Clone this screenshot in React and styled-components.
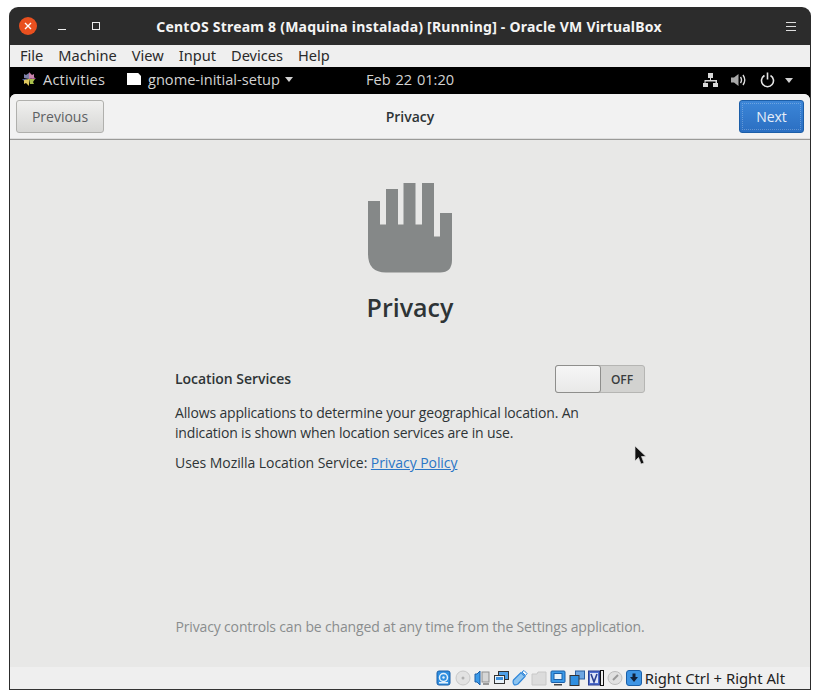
import styled, { createGlobalStyle } from "styled-components";

const Global = createGlobalStyle`
  html, body { margin: 0; padding: 0; background: #fff; }
  body { width: 820px; height: 699px; overflow: hidden; }
`;

const Page = styled.div`
  width: 820px;
  height: 699px;
  padding: 7px 9px 9px 9px;
  box-sizing: border-box;
  position: relative;
`;
const Win = styled.div`
  width: 802px;
  height: 683px;
  display: flex;
  flex-direction: column;
  border-radius: 9px 9px 0 0;
  overflow: hidden;
  background: #2c2c2c;
`;
const TitleBar = styled.div`
  height: 38px;
  flex: none;
  display: grid;
  grid-template-columns: 1fr auto 1fr;
  align-items: center;
  color: #f4f4f4;
  padding: 0 15px 0 10px;
`;
const WinControls = styled.div`
  display: flex;
  align-items: center;
`;
const CloseBtn = styled.div`
  width: 18px;
  height: 18px;
  border-radius: 50%;
  background: #e9501f;
  display: flex;
  align-items: center;
  justify-content: center;
`;
const MinBtn = styled.div`
  width: 8px;
  height: 1px;
  background: #eee;
  margin: 7px 0 0 21px;
`;
const MaxBtn = styled.div`
  width: 6px;
  height: 6px;
  border: 1px solid #eee;
  margin-left: 26px;
`;
const WinTitle = styled.div`
  font: 700 14px "Noto Sans", sans-serif;
  letter-spacing: 0.22px;
  white-space: nowrap;
  padding-left: 3px;
`;
const Burger = styled.div`
  justify-self: end;
  width: 10px;
  height: 7px;
  border-top: 1px solid #ddd;
  border-bottom: 1px solid #ddd;
  position: relative;
  &::after {
    content: "";
    position: absolute;
    left: 0;
    right: 0;
    top: 3px;
    height: 1px;
    background: #ddd;
  }
`;
const Frame = styled.div`
  flex: 1;
  display: flex;
  flex-direction: column;
  min-height: 0;
  margin: 0 1px 0 1px;
  border-bottom: 1px solid #333;
  background: #000;
`;
const MenuBar = styled.div`
  height: 22px;
  flex: none;
  box-sizing: border-box;
  padding: 0 0 2px 10px;
  background: #efefef;
  display: flex;
  align-items: center;
  gap: 15px;
  font: 14.6px "Noto Sans", sans-serif;
  color: #2a2a2a;
`;
const GnomeBar = styled.div`
  height: 27px;
  flex: none;
  box-sizing: border-box;
  background: #000;
  color: #d2d2d2;
  display: flex;
  align-items: center;
  font: 14.6px "Open Sans", sans-serif;
  padding: 0 17px 3px 12px;
`;
const Activities = styled.div`
  display: flex;
  align-items: center;
  gap: 7px;
  width: 105px;
  letter-spacing: 0.2px;
`;
const AppMenu = styled.div`
  display: flex;
  align-items: center;
  width: 239px;
`;
const AppIcon = styled.div`
  width: 14px;
  height: 12px;
  background: #fff;
  clip-path: polygon(0 0, 80% 0, 100% 25%, 100% 100%, 0 100%);
  margin-right: 7px;
`;
const Caret = styled.div`
  width: 0;
  height: 0;
  border-left: 4.5px solid transparent;
  border-right: 4.5px solid transparent;
  border-top: 5px solid #d2d2d2;
  margin-left: ${(p) => p.$gap || 0}px;
`;
const Clock = styled.div`
  flex: 1;
  word-spacing: 1px;
`;
const Tray = styled.div`
  display: flex;
  align-items: center;
  padding-top: 2px;
`;
const Dialog = styled.div`
  flex: 1;
  display: flex;
  flex-direction: column;
  min-height: 0;
  background: #e8e8e7;
  border-radius: 6px 6px 0 0;
  overflow: hidden;
`;
const Header = styled.div`
  height: 46px;
  flex: none;
  box-sizing: border-box;
  background: #f2f2f2;
  border-bottom: 1px solid #9a9a98;
  box-shadow: inset 0 -1px 0 #dedede;
  display: grid;
  grid-template-columns: 1fr auto 1fr;
  align-items: center;
  padding: 0 6px;
`;
const HeaderTitle = styled.div`
  font: 600 14px "Open Sans", sans-serif;
  color: #2e3436;
`;
const NavButton = styled.div`
  height: 33px;
  box-sizing: border-box;
  display: flex;
  align-items: center;
  justify-content: center;
  justify-self: ${(p) => (p.$primary ? "end" : "start")};
  border-radius: 3px;
  font: 14px "Open Sans", sans-serif;
  width: ${(p) => (p.$primary ? 65 : 88)}px;
  color: ${(p) => (p.$primary ? "#e6eef8" : "#5d6163")};
  border: 1px solid ${(p) => (p.$primary ? "#1c5ea8" : "#b0b0ad")};
  outline: ${(p) => (p.$primary ? "1px dotted rgba(255, 255, 255, 0.25)" : "none")};
  outline-offset: -4px;
  background: ${(p) =>
    p.$primary
      ? "linear-gradient(#3c86d8, #2b6fc2)"
      : "linear-gradient(#f0f0ef, #d7d7d5)"};
`;
const Body = styled.div`
  flex: 1;
  display: flex;
  flex-direction: column;
  align-items: center;
  min-height: 0;
  padding-top: 43px;
`;
const HandIcon = styled.svg`
  width: 86px;
  height: 90px;
  display: block;
  flex: none;
`;
const BigTitle = styled.h1`
  margin: 16px 0 0;
  height: 36px;
  font: 600 25px/36px "Open Sans", sans-serif;
  color: #2e3436;
`;
const Panel = styled.div`
  width: 470px;
  margin-top: 40px;
  font: 14px/20px "Open Sans", sans-serif;
  letter-spacing: -0.16px;
  color: #2e3436;
  flex: 1;
  display: flex;
  flex-direction: column;
`;
const SettingRow = styled.div`
  display: flex;
  align-items: center;
  justify-content: space-between;
  height: 28px;
  margin-bottom: 10px;
  font-weight: 600;
  letter-spacing: -0.05px;
`;
const RowLabel = styled.span`
  padding-bottom: 1px;
`;
const Toggle = styled.div`
  width: 90px;
  height: 28px;
  box-sizing: border-box;
  background: #d2d2d0;
  border: 1px solid #b5b5b3;
  border-radius: 3px;
  position: relative;
  display: flex;
  align-items: center;
  justify-content: flex-end;
  padding-right: 11px;
  font: 600 12px "Open Sans", sans-serif;
  color: #3a3d3e;
`;
const Knob = styled.div`
  position: absolute;
  left: -1px;
  top: -1px;
  width: 46px;
  height: 28px;
  box-sizing: border-box;
  border: 1px solid #8e8e8c;
  border-radius: 3px;
  background: linear-gradient(#f6f6f6, #e9e9e8);
`;
const Para = styled.p`
  margin: 0 0 10px;
  letter-spacing: ${(p) => (p.$loose ? "-0.06px" : "inherit")};
`;
const PolicyLink = styled.a`
  color: #2a76c6;
  text-decoration: underline;
`;
const Footnote = styled.div`
  margin-top: auto;
  margin-bottom: 30px;
  text-align: center;
  white-space: nowrap;
  color: #8a8d8e;
`;
const StatusBar = styled.div`
  height: 22px;
  flex: none;
  background: #efefef;
  display: flex;
  align-items: center;
  justify-content: flex-end;
  gap: 3px;
  padding-right: 25px;
  font: 14.8px "Noto Sans", sans-serif;
  color: #222;
`;
const Sep = styled.div`
  width: 2px;
  height: 14px;
  border: 1px solid #111;
  margin-left: -3px;
`;
const StatusIcon = styled.svg`
  flex: none;
  height: 16px;
  width: ${(p) => p.$w || 16}px;
`;
const Cursor = styled.svg`
  position: absolute;
  left: 634px;
  top: 445px;
  width: 13px;
  height: 21px;
`;

export default function App() {
  return (
    <Page>
      <Global />
      <Win>
        <TitleBar>
          <WinControls>
            <CloseBtn>
              <svg width="8" height="8" viewBox="0 0 8 8">
                <path d="M1 1L7 7M7 1L1 7" stroke="#fff" strokeWidth="1.4" />
              </svg>
            </CloseBtn>
            <MinBtn />
            <MaxBtn />
          </WinControls>
          <WinTitle>CentOS Stream 8 (Maquina instalada) [Running] - Oracle VM VirtualBox</WinTitle>
          <Burger />
        </TitleBar>
        <Frame>
          <MenuBar>
            <span>File</span>
            <span>Machine</span>
            <span>View</span>
            <span>Input</span>
            <span>Devices</span>
            <span>Help</span>
          </MenuBar>
          <GnomeBar>
            <Activities>
              <svg width="14" height="14" viewBox="0 0 14 14">
                <path d="M7 0L9.500 2.500 7 5Z" fill="#c06a9a" />
                <path d="M14 7L11.500 4.500 9 7Z" fill="#9a4f8c" />
                <path d="M7 14L4.500 11.500 7 9Z" fill="#c9b53c" />
                <path d="M0 7L2.500 9.500 5 7Z" fill="#4e5a9c" />
                <path d="M7 7V1L4 3 2 2V6Z" fill="#7d80a8" />
                <path d="M7 7H13L11 10 12 12H8Z" fill="#a9c04c" />
                <path d="M7 7V13L4 11 2 12V8Z" fill="#e0c860" />
                <path d="M7 7V1L10 3 12 2V6Z" fill="#c884ac" />
              </svg>
              Activities
            </Activities>
            <AppMenu>
              <AppIcon />
              gnome-initial-setup
              <Caret $gap={5} />
            </AppMenu>
            <Clock>Feb 22 01:20</Clock>
            <Tray>
              <svg width="15" height="15" viewBox="0 0 15 15">
                <path d="M5 0H10V5H8V7H14V10H15V14H10V10H12.500V8.500H2.500V10H5V14H0V10H1.500V7H7V5H5Z" fill="#d8d8d8" />
              </svg>
              <svg width="16" height="14" viewBox="0 0 16 14" style={{ marginLeft: 13 }}>
                <path d="M0 4.500H3L7.500 1V13L3 9.500H0Z" fill="#a8a8a8" />
                <path d="M9.500 4Q11.500 7 9.500 10M12 2Q15.500 7 12 12" stroke="#d8d8d8" strokeWidth="1.400" fill="none" />
              </svg>
              <svg width="15" height="16" viewBox="0 0 15 16" style={{ marginLeft: 13 }}>
                <path d="M4.500 3.500A6 6 0 1 0 10.500 3.500M7.500 0.500V7.500" stroke="#e4e4e4" strokeWidth="1.600" fill="none" />
              </svg>
              <Caret $gap={10} />
            </Tray>
          </GnomeBar>
          <Dialog>
            <Header>
              <NavButton>Previous</NavButton>
              <HeaderTitle>Privacy</HeaderTitle>
              <NavButton $primary>Next</NavButton>
            </Header>
            <Body>
              <HandIcon viewBox="0 0 86 90">
                <path
                  d="M1 18H13V41.500H19V6H31V41.500H36.500V0H48.500V41.500H55V0H67V53.500H73V30H85V77Q85 89.500 73 89.500H19Q1 89.500 1 71Z"
                  fill="#858888"
                />
              </HandIcon>
              <BigTitle>Privacy</BigTitle>
              <Panel>
                <SettingRow>
                  <RowLabel>Location Services</RowLabel>
                  <Toggle>
                    <Knob />
                    OFF
                  </Toggle>
                </SettingRow>
                <Para>
                  Allows applications to determine your geographical location. An
                  <br />
                  indication is shown when location services are in use.
                </Para>
                <Para $loose>
                  Uses Mozilla Location Service: <PolicyLink>Privacy Policy</PolicyLink>
                </Para>
                <Footnote>Privacy controls can be changed at any time from the Settings application.</Footnote>
              </Panel>
            </Body>
          </Dialog>
          <StatusBar>
            <StatusIcon viewBox="0 0 16 16">
              <rect x="1" y="1" width="13" height="14" rx="2" fill="#2f8fe0" stroke="#1a5fa8" />
              <circle cx="7.500" cy="7.500" r="4" fill="none" stroke="#e4f0fa" strokeWidth="1.500" />
              <circle cx="7.500" cy="7.500" r="1.200" fill="#e4f0fa" />
              <rect x="3" y="12" width="9" height="1.500" fill="#e4f0fa" />
            </StatusIcon>
            <StatusIcon viewBox="0 0 16 16">
              <circle cx="8" cy="8" r="7" fill="#e2e2e2" stroke="#c8c8c8" />
              <circle cx="8" cy="8" r="1.500" fill="#b0b0b0" />
            </StatusIcon>
            <StatusIcon viewBox="0 0 16 16">
              <path d="M1 4L3 4L6 1V15L3 12H1Z" fill="#3b9ae8" stroke="#1a5fa8" />
              <rect x="8" y="2" width="7" height="10" fill="#d6d6d6" stroke="#8f8f8f" />
              <rect x="9" y="13" width="6" height="2" fill="#999" />
            </StatusIcon>
            <StatusIcon viewBox="0 0 16 16">
              <rect x="5.500" y="1.500" width="10" height="8" fill="#4f9fe6" stroke="#333" />
              <rect x="1.500" y="5.500" width="10" height="8" fill="#e8f2fa" stroke="#333" />
              <rect x="3" y="7" width="7" height="3" fill="#3b8fdc" />
            </StatusIcon>
            <StatusIcon viewBox="0 0 16 16">
              <path d="M1.500 10L9 2.500L13 6.500L6 14Q3 15.500 2 14.500Q0.500 12.500 1.500 10Z" fill="#8cc4f0" stroke="#2f86d8" strokeWidth="1.200" />
              <path d="M10 2L12 0.500L15 3.500L13.500 5.500Z" fill="#fff" stroke="#2f86d8" />
            </StatusIcon>
            <StatusIcon viewBox="0 0 16 16">
              <path d="M1 4H6L7 2H15V15H1Z" fill="#dcdcdc" stroke="#c8c8c8" />
            </StatusIcon>
            <StatusIcon viewBox="0 0 16 16">
              <rect x="1" y="1" width="14" height="11.500" rx="1" fill="#3b9ae8" stroke="#1a5fa8" />
              <rect x="4" y="3.500" width="8" height="6" fill="#e8f2fa" stroke="#1a5fa8" />
              <rect x="4" y="14" width="8" height="1.500" fill="#444" />
            </StatusIcon>
            <StatusIcon viewBox="0 0 16 16">
              <rect x="6.500" y="1" width="9" height="8" fill="#6ea6e2" stroke="#2a5fa0" />
              <rect x="1" y="5.500" width="9" height="10" fill="#2f8fe0" stroke="#333" />
            </StatusIcon>
            <StatusIcon $w={12} viewBox="0 0 12 16">
              <rect x="0.500" y="1" width="11" height="14" fill="#4f6fd0" stroke="#2a3f90" />
              <rect x="2" y="3" width="8" height="10" fill="#dfe6f8" />
              <path d="M3 4L6 12L9 4" stroke="#2a3f90" strokeWidth="1.600" fill="none" />
            </StatusIcon>
            <Sep />
            <StatusIcon viewBox="0 0 16 16">
              <ellipse cx="8" cy="8" rx="7" ry="6.500" fill="#e0e0e0" stroke="#bdbdbd" />
              <path d="M6 10L11 5" stroke="#999" strokeWidth="2" />
            </StatusIcon>
            <StatusIcon viewBox="0 0 16 16">
              <rect x="0.500" y="0.500" width="15" height="15" rx="2.500" fill="#3d94e4" stroke="#1a5fa8" />
              <path d="M6.500 3.500H9.500V7H12L8 12L4 7H6.500Z" fill="#10203a" />
            </StatusIcon>
            <span>Right Ctrl + Right Alt</span>
          </StatusBar>
        </Frame>
      </Win>
      <Cursor viewBox="0 0 13 21">
        <path d="M1 1V16L4.500 12.500L7 19L10 18L7.500 11.500H12Z" fill="#111" stroke="#ddd" strokeWidth="0.700" />
      </Cursor>
    </Page>
  );
}
